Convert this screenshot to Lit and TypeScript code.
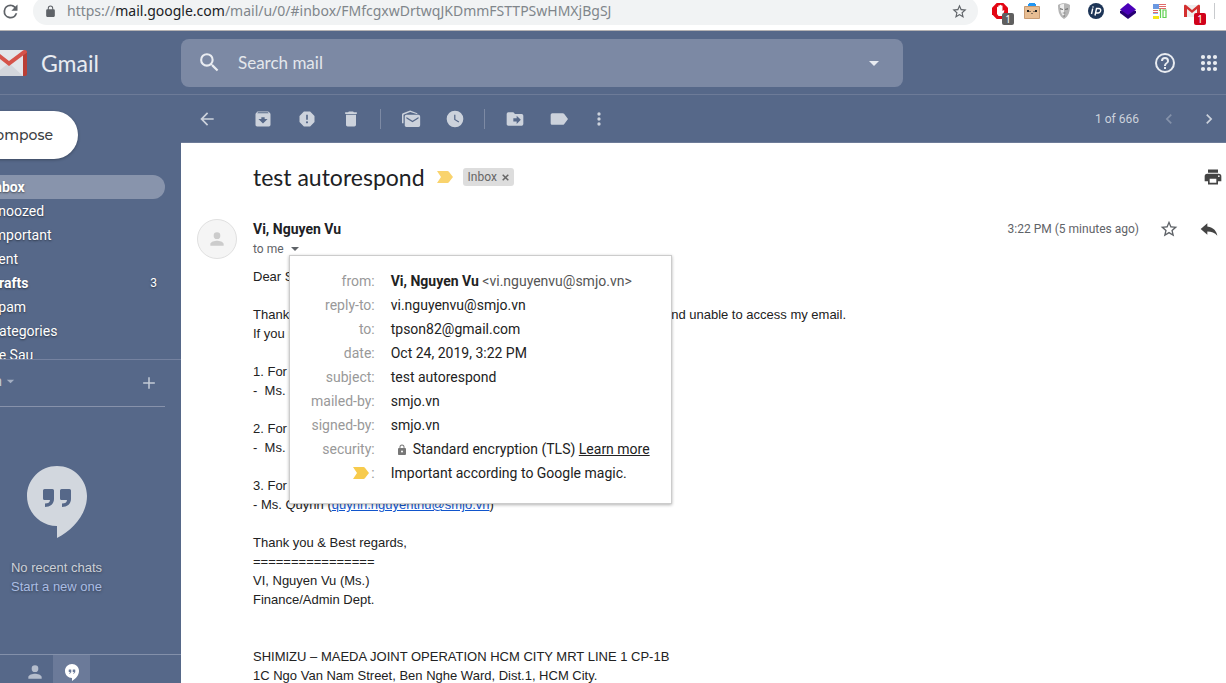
import { LitElement, html, css, svg, TemplateResult } from "lit";
import { customElement } from "lit/decorators.js";
import { classMap } from "lit/directives/class-map.js";

const paths: Record<string, string> = {
  reload: "M17.65 6.35A7.96 7.96 0 0 0 12 4a8 8 0 1 0 7.73 10h-2.08A6 6 0 1 1 12 6c1.66 0 3.14.69 4.22 1.78L13 11h7V4z",
  lock: "M18 8h-1V6A5 5 0 0 0 7 6v2H6a2 2 0 0 0-2 2v10c0 1.100.9 2 2 2h12a2 2 0 0 0 2-2V10a2 2 0 0 0-2-2zM8.900 6a3.100 3.100 0 0 1 6.200 0v2H8.900z",
  lockHole: "M18 8h-1V6A5 5 0 0 0 7 6v2H6a2 2 0 0 0-2 2v10c0 1.100.9 2 2 2h12a2 2 0 0 0 2-2V10a2 2 0 0 0-2-2zm-6 9a2 2 0 1 1 0-4 2 2 0 0 1 0 4zM8.900 8V6a3.100 3.100 0 0 1 6.200 0v2z",
  star: "M22 9.240l-7.190-.62L12 2 9.190 8.630 2 9.240l5.460 4.730L5.820 21 12 17.270 18.180 21l-1.630-7.030L22 9.240zM12 15.400l-3.760 2.270 1-4.280-3.320-2.880 4.380-.38L12 6.100l1.710 4.040 4.380.38-3.320 2.880 1 4.280L12 15.400z",
  search: "M15.500 14h-.79l-.28-.27A6.470 6.470 0 0 0 16 9.500 6.500 6.500 0 1 0 9.500 16c1.610 0 3.090-.59 4.230-1.570l.27.28v.79l5 4.990L20.490 19l-4.990-5zm-6 0a4.500 4.500 0 1 1 0-9 4.500 4.500 0 0 1 0 9z",
  help: "M11 18h2v-2h-2v2zm1-16a10 10 0 1 0 0 20 10 10 0 0 0 0-20zm0 18a8 8 0 1 1 0-16 8 8 0 0 1 0 16zm0-14a4 4 0 0 0-4 4h2a2 2 0 1 1 4 0c0 2-3 1.750-3 5h2c0-2.250 3-2.500 3-5a4 4 0 0 0-4-4z",
  back: "M20 11H7.830l5.590-5.590L12 4l-8 8 8 8 1.410-1.410L7.830 13H20v-2z",
  archive: "M20.540 5.230l-1.390-1.680A1.450 1.450 0 0 0 18 3H6c-.47 0-.88.21-1.160.55L3.460 5.230C3.170 5.570 3 6.020 3 6.500V19c0 1.100.9 2 2 2h14a2 2 0 0 0 2-2V6.500c0-.48-.17-.93-.46-1.270zM12 17.500L6.500 12H10v-2h4v2h3.500L12 17.500zM5.120 5l.81-1h12l.94 1H5.120z",
  spam: "M15.730 3H8.270L3 8.270v7.460L8.270 21h7.460L21 15.730V8.270L15.730 3zM12 17.300a1.300 1.300 0 1 1 0-2.600 1.300 1.300 0 0 1 0 2.600zm1-4.300h-2V7h2v6z",
  trash: "M6 19c0 1.100.9 2 2 2h8a2 2 0 0 0 2-2V7H6v12zM19 4h-3.500l-1-1h-5l-1 1H5v2h14V4z",
  unread: "M1.200 17V6.800c0-.8.400-1.400 1.100-1.700L11 1.800l8.600 3.300v1.300L11 3.700 3 6.800V17zM21 7H6.500a2 2 0 0 0-2 2v10.500c0 1.100.9 2 2 2H21a2 2 0 0 0 2-2V9a2 2 0 0 0-2-2zm0 4.400l-7.200 4.500-7.300-4.500V9.500l7.300 4.500L21 9.500z",
  clock: "M12 2a10 10 0 1 0 0 20 10 10 0 0 0 0-20zm4.200 14.200L11 13V7h1.500v5.200l4.500 2.700-.8 1.300z",
  move: "M20 6h-8l-2-2H4a2 2 0 0 0-2 2v12c0 1.100.9 2 2 2h16a2 2 0 0 0 2-2V8a2 2 0 0 0-2-2zm-6 12v-3h-4v-4h4V8l5 5-5 5z",
  label: "M18.100 5.840A2 2 0 0 0 16.500 5H4a2 2 0 0 0-2 2v10c0 1.100.9 2 2 2h12.500c.67 0 1.270-.33 1.630-.84L22.800 12l-4.700-6.160z",
  more: "M12 8a2 2 0 1 0 0-4 2 2 0 0 0 0 4zm0 2a2 2 0 1 0 0 4 2 2 0 0 0 0-4zm0 6a2 2 0 1 0 0 4 2 2 0 0 0 0-4z",
  prev: "M15.410 7.410L14 6l-6 6 6 6 1.410-1.410L10.830 12z",
  next: "M10 6L8.590 7.410 13.170 12l-4.580 4.590L10 18l6-6z",
  print: "M19 8H5a3 3 0 0 0-3 3v6h4v4h12v-4h4v-6a3 3 0 0 0-3-3zm-3 11H8v-5h8v5zm3-7a1 1 0 1 1 0-2 1 1 0 0 1 0 2zm-1-9H6v4h12V3z",
  reply: "M10 9V5l-8 7 8 7v-4.100c5 0 9 1.600 12 5.100-1-5-4-10-12-11z",
  person: "M12 12a4 4 0 1 0 0-8 4 4 0 0 0 0 8zm0 2c-2.670 0-8 1.340-8 4v2h16v-2c0-2.660-5.330-4-8-4z",
  plus: "M19 12.900h-6.100V19h-1.800v-6.100H5v-1.800h6.100V5h1.800v6.100H19z",
  caret: "M4 8h16l-8 8z",
};

const icon = (name: string, size = 20) =>
  html`<svg width=${size} height=${size} viewBox="0 0 24 24" fill="currentColor" fill-rule="evenodd" aria-hidden="true"><path d=${paths[name]}></path></svg>`;

const marker = html`<svg width="16" height="12" viewBox="0 0 16 12" fill="currentColor" aria-hidden="true"><path d="M0 0h10.500c.6 0 1 .2 1.400.7L16 6l-4.100 5.300c-.4.500-.8.700-1.400.7H0l4-6z"></path></svg>`;

const hangouts = (w: number, h: number) =>
  html`<svg width=${w} height=${h} viewBox="0 0 60 72" fill="currentColor" fill-rule="evenodd" aria-hidden="true"><path d="M30 0C13.400 0 0 13.400 0 30s13.400 30 30 30v12c16-8 30-24 30-42C60 13.400 46.600 0 30 0zM17.500 23h8a1.500 1.500 0 0 1 1.500 1.500V33c0 5-4 8-9 8v-3.500c3 0 5-1 5-3.500h-5.500a1.500 1.500 0 0 1-1.500-1.500v-8a1.500 1.500 0 0 1 1.500-1.500zm17 0h8a1.500 1.500 0 0 1 1.500 1.500V33c0 5-4 8-9 8v-3.500c3 0 5-1 5-3.500h-5.500a1.500 1.500 0 0 1-1.500-1.500v-8a1.500 1.500 0 0 1 1.500-1.500z"></path></svg>`;

@customElement("browser-bar")
export class BrowserBar extends LitElement {
  static styles = css`
    :host { display: flex; height: 30px; align-items: flex-start; overflow: hidden; background: #fff; border-bottom: 1px solid #b5b3b4; color: #5f6368; font: 14px/28px "Noto Sans", sans-serif; }
    button { display: grid; place-items: center; padding: 0; border: 0; background: none; color: inherit; }
    .reload { width: 20px; height: 23px; }
    .pill { flex: 1; display: flex; align-items: center; height: 28px; margin: -3px 0 0 13px; padding: 0 10px 0 11px; border-radius: 14px; background: #f1f3f4; }
    .url { flex: 1; margin-left: 10px; color: #80868b; white-space: nowrap; }
    .host { color: #202124; }
    .extensions { display: flex; gap: 16px; padding: 3px 14px 0; }
    .ext { position: relative; width: 16px; height: 16px; }
    .badge { position: absolute; left: 10px; top: 10px; width: 12px; height: 12px; border-radius: 2px; background: #5f5f5f; color: #fff; font: 10px/12px "Noto Sans", sans-serif; text-align: center; }
    .red { background: #d0021b; }
    .line { width: 1px; height: 16px; margin: 3px 11px 0 0; background: #c8cacd; }
  `;

  private ext(name: string, art: TemplateResult, badge = "") {
    return html`<button class="ext" aria-label=${name}>
      <svg width="16" height="16" viewBox="0 0 16 16" aria-hidden="true">${art}</svg>
      ${badge ? html`<span class=${classMap({ badge: true, red: name === "Mail" })}>${badge}</span>` : ""}
    </button>`;
  }

  render() {
    return html`
      <button class="reload" aria-label="Reload">${icon("reload", 21)}</button>
      <div class="pill">
        ${icon("lock", 13)}
        <span class="url">https://<span class="host">mail.google.com</span>/mail/u/0/#inbox/FMfcgxwDrtwqJKDmmFSTTPSwHMXjBgSJ</span>
        <button aria-label="Bookmark">${icon("star", 17)}</button>
      </div>
      <div class="extensions">
        ${this.ext("Blocker", svg`<path fill="#e30613" d="M4.700 0h6.600L16 4.700v6.600L11.300 16H4.700L0 11.300V4.700z"/><path fill="#fff" d="M5 4.500c0-1 1.300-1 1.300 0V3c0-1 1.400-1 1.400 0v-.5c0-1 1.400-1 1.400 0V3c0-1 1.400-1 1.400 0v5l.8-.6c.8-.5 1.300.2.900.8L10.500 13H6.500L5 11z"/>`, "1")}
        ${this.ext("Robot", svg`<path fill="#e7bd93" stroke="#c89b72" d="M.5 3.500h15v12H.5z"/><path fill="#2196f3" d="M5 0h6v1h1v2H4V1h1z"/><path fill="#222" d="M3 7h2v2H3zm8 0h2v2h-2zM5.500 8h1v1h-1zm4 0h1v1h-1zM7.500 10h1v1h-1z"/>`)}
        ${this.ext("Mask", svg`<path fill="#b5b5b5" d="M2 2c3-2.500 9-2.500 12 0 0 6-1 11-6 14C3 13 2 8 2 2z"/><path fill="#efefef" d="M4 2c1-1 3-1 4-1v13C5 11 4 7 4 2z"/><path fill="#777" d="M4 5l3 1v1L4 6.500zM9 6l3-1v1.500L9 7zM6 10l2-.6 2 .6-2 .6zM7.500 12h1v2h-1z"/>`)}
        ${this.ext("IP", svg`<circle cx="8" cy="8" r="8" fill="#1d3557"/><path fill="none" stroke="#fff" stroke-width="1.400" d="M4.700 5.500L3.500 11M7 12.500l1.500-7h2.300c3 0 2.200 4.500-.8 4.500H8"/><circle cx="5" cy="4" r=".8" fill="#fff"/>`)}
        ${this.ext("Layers", svg`<path fill="#280073" d="M0 8l8-3 8 3v2l-8 6-8-6z"/><path fill="#4a00b8" d="M8 0l8 6.500-8 5.500-8-5.500z"/>`)}
        ${this.ext("Languages", svg`<path fill="#6a98e0" d="M1 1h6v5H1z"/><path fill="#e06a6a" d="M7 1h7v1H7zm0 2h7v1H7zm0 2h7v1H7zM1 7h5v1H1zm0 2h5v1H1z"/><path fill="#8bb8f0" d="M1 10h5v1H1z"/><path fill="#f5e615" d="M1 13h6v3H1z"/><path fill="none" stroke="#5fd052" stroke-width="1.200" d="M7 7.500l1.500-1V15M11 7h3v7.500h-3z"/>`)}
        ${this.ext("Mail", svg`<path fill="#eee" d="M1 2h14v12H1z"/><path fill="#d32f2f" d="M0 3c0-1 1-1.500 2-1l6 5 6-5c1-.5 2 0 2 1v11h-3V6l-5 4-5-4v8H0z"/>`, "1")}
      </div>
      <span class="line"></span>
    `;
  }
}

@customElement("mail-rail")
export class MailRail extends LitElement {
  static styles = css`
    :host { display: flex; flex-direction: column; min-height: 0; overflow: hidden; color: #fff; font: 14px/24px Roboto, sans-serif; }
    .shift { flex: none; display: flex; flex-direction: column; height: 265px; box-sizing: border-box; margin-left: -79px; padding-top: 16px; overflow: hidden; border-bottom: 1px solid #7582a0; text-shadow: 0 1px 2px rgba(0, 0, 0, 0.5); }
    .compose { flex: none; width: 149px; height: 48px; margin: 0 0 16px 8px; padding: 0 25px 0 0; border: 0; border-radius: 24px; background: #fff; color: #3c4043; font: 500 14px/46px Montserrat, "Open Sans", sans-serif; text-align: right; box-shadow: 0 1px 3px rgba(0, 0, 0, 0.3); }
    .item { display: flex; justify-content: space-between; flex: none; height: 24px; margin-right: 16px; padding: 0 8px 0 69px; border-radius: 0 12px 12px 0; color: inherit; text-decoration: none; }
    .bold { font-weight: 700; }
    .active { background: #8894ac; }
    .count { font-size: 12px; font-weight: 400; }
    .account { display: flex; flex: none; justify-content: space-between; align-items: center; height: 46px; margin-right: 16px; border-bottom: 1px solid #8792ab; color: #c3cad6; }
    .account button { display: flex; align-items: center; padding: 0; border: 0; background: none; color: inherit; font: inherit; }
    .who { margin-left: -22px; gap: 3px; height: 28px; align-self: flex-start; padding-top: 8px; }
    .who svg { color: #a3aec2; }
    .add { margin-right: 6px; }
    .account .who { padding-top: 14px; }
    .chats { flex: 1; width: 113px; padding-top: 59px; box-sizing: border-box; color: #ccd1d8; font: 13px/19px "Liberation Sans", Arial, sans-serif; text-align: center; text-shadow: 0 1px 3px rgba(0, 0, 0, 0.4); }
    .chats svg { display: block; margin: 0 auto 20px; color: #d2d7de; }
    .chats p { margin: 0; }
    .chats a { color: #aabde4; text-decoration: none; }
    .tabs { display: flex; flex: none; height: 28px; border-top: 1px solid #8390aa; padding-left: 16px; }
    .tab { display: grid; place-items: center; width: 37px; height: 34px; padding: 0; border: 0; background: none; color: #b5bdcc; }
    .on { background: #6b7a99; color: #fff; }
  `;

  private folders = [
    { name: "Inbox", bold: true, active: true },
    { name: "Snoozed" },
    { name: "Important" },
    { name: "Sent" },
    { name: "Drafts", bold: true, count: 3 },
    { name: "Spam" },
    { name: "Categories" },
    { name: "Be Sau" },
  ] as { name: string; bold?: boolean; active?: boolean; count?: number }[];

  render() {
    return html`
      <nav class="shift">
        <button class="compose">Compose</button>
        ${this.folders.map((f) => html`<a href="#" class=${classMap({ item: true, bold: !!f.bold, active: !!f.active })}><span>${f.name}</span><span class="count">${f.count ?? ""}</span></a>`)}
      </nav>
      <div class="account">
        <button class="who"><span>Son</span>${icon("caret", 11)}</button>
        <button class="add" aria-label="New chat">${icon("plus", 20)}</button>
      </div>
      <section class="chats">
        ${hangouts(60, 72)}
        <p>No recent chats</p>
        <a href="#">Start a new one</a>
      </section>
      <div class="tabs">
        <button class="tab" aria-label="Contacts">${icon("person", 20)}</button>
        <button class="tab on" aria-label="Conversations">${hangouts(14, 17)}</button>
      </div>
    `;
  }
}

@customElement("mail-message")
export class MailMessage extends LitElement {
  static styles = css`
    :host { display: block; min-width: 0; min-height: 0; overflow: hidden; padding: 0 3px 0 16px; background: #fff; color: #202124; font: 14px/24px Roboto, sans-serif; }
    button { display: inline-flex; align-items: center; padding: 0; border: 0; background: none; color: inherit; font: inherit; }
    .title { display: flex; align-items: center; height: 28px; padding: 20px 0 28px 56px; }
    h1 { margin: 0 12px 0 0; font: 400 23px/28px Lato, sans-serif; }
    .marker { color: #f9d36d; }
    .chip { display: flex; align-items: center; gap: 5px; height: 18px; margin: 0 auto 0 10px; padding: 0 5px; border-radius: 3px; background: #ddd; color: #666; font-size: 12px; }
    .tool { color: #444; }
    .sender { display: flex; align-items: flex-start; padding-right: 4px; }
    .avatar { display: grid; place-items: center; width: 38px; height: 38px; margin-right: 16px; border: 1px solid #e0e0e0; border-radius: 50%; background: #f5f5f5; color: #ccc; }
    .who { position: relative; line-height: 20px; }
    .name { display: block; }
    .to { display: flex; gap: 5px; height: 20px; color: #5f6368; font-size: 12px; }
    .meta { display: flex; align-items: center; gap: 20px; height: 20px; margin-left: auto; color: #5f6368; font-size: 12px; white-space: nowrap; }
    .details { position: absolute; z-index: 1; left: 36px; top: 36px; padding: 13px 21px 18px; border: 1px solid #ccc; background: #fff; box-shadow: 0 1px 3px rgba(0, 0, 0, 0.3); white-space: nowrap; }
    table { border-collapse: collapse; line-height: 24px; }
    th, td { height: 24px; padding: 0; font-weight: 400; }
    th { padding-right: 16px; color: #999; text-align: right; }
    td { color: #222; text-align: left; }
    td a { color: inherit; }
    .address { color: #555; }
    .gold { display: inline-block; margin-right: 2px; color: #f7cb4d; vertical-align: -1px; }
    .gold svg, .lock svg { display: block; }
    .lock { display: inline-block; margin: 0 5px; color: #777; vertical-align: -2px; }
    .body { margin: 8px 0 0 56px; color: #222; font: 13px/19px "Liberation Sans", Arial, sans-serif; white-space: pre; }
    .body a { color: #15c; }
  `;

  private rows: [unknown, unknown][] = [
    ["from:", html`<b>Vi, Nguyen Vu</b> <span class="address">&lt;vi.nguyenvu@smjo.vn&gt;</span>`],
    ["reply-to:", "vi.nguyenvu@smjo.vn"],
    ["to:", "tpson82@gmail.com"],
    ["date:", "Oct 24, 2019, 3:22 PM"],
    ["subject:", "test autorespond"],
    ["mailed-by:", "smjo.vn"],
    ["signed-by:", "smjo.vn"],
    ["security:", html`<span class="lock">${icon("lockHole", 12)}</span>Standard encryption (TLS) <a href="#">Learn more</a>`],
    [html`<span class="gold">${marker}</span>:`, "Important according to Google magic."],
  ];

  private lines: unknown[] = [
    "Dear Sir,",
    "",
    "Thank you for your email. I am out of the office until Monday next week and unable to access my email.",
    "If you need help:",
    "",
    "1. For HR:",
    "-  Ms. Lan",
    "",
    "2. For tax:",
    "-  Ms. Hoa",
    "",
    "3. For IT:",
    html`- Ms. Quynh (<a href="mailto:quynh.nguyenthu@smjo.vn">quynh.nguyenthu@smjo.vn</a>)`,
    "",
    "Thank you & Best regards,",
    "================",
    "VI, Nguyen Vu (Ms.)",
    "Finance/Admin Dept.",
    "",
    "",
    "SHIMIZU – MAEDA JOINT OPERATION HCM CITY MRT LINE 1 CP-1B",
    "1C Ngo Van Nam Street, Ben Nghe Ward, Dist.1, HCM City.",
  ];

  render() {
    return html`
      <div class="title">
        <h1>test autorespond</h1>
        <button class="marker" aria-label="Important">${marker}</button>
        <span class="chip">Inbox <button aria-label="Remove label"><svg width="7" height="7" viewBox="0 0 7 7" stroke="currentColor" stroke-width="1.500"><path d="M.7.7l5.600 5.600M6.300.7L.7 6.300"></path></svg></button></span>
        <button class="tool" aria-label="Print">${icon("print")}</button>
      </div>
      <div class="sender">
        <span class="avatar">${icon("person")}</span>
        <div class="who">
          <b class="name">Vi, Nguyen Vu</b>
          <button class="to">to me ${icon("caret", 12)}</button>
          <div class="details">
            <table>
              ${this.rows.map(([k, v]) => html`<tr><th scope="row">${k}</th><td>${v}</td></tr>`)}
            </table>
          </div>
        </div>
        <div class="meta">
          <span>3:22 PM (5 minutes ago)</span>
          <button aria-label="Star">${icon("star")}</button>
          <button class="tool" aria-label="Reply">${icon("reply")}</button>
        </div>
      </div>
      <div class="body">${this.lines.map((l) => html`${l}<br />`)}</div>
    `;
  }
}

@customElement("app-root")
export class AppRoot extends LitElement {
  static styles = css`
    :host { display: flex; flex-direction: column; height: 100vh; overflow: hidden; background: #566889; font-family: Roboto, sans-serif; }
    button { display: grid; place-items: center; padding: 0; border: 0; background: none; color: inherit; }
    header { flex: none; display: flex; align-items: center; height: 63px; padding-right: 8px; border-bottom: 1px solid #6d7b98; color: #e9ecf1; }
    .brand { display: flex; align-items: center; gap: 13px; flex: none; width: 181px; color: #e9ecf1; font: 23px/28px Lato, sans-serif; text-decoration: none; }
    .search { flex: 0 1 722px; display: flex; align-items: center; height: 48px; border-radius: 8px; background: #7c89a4; }
    .glass { margin: 0 16px; }
    .search input { flex: 1; min-width: 0; padding: 0; border: 0; outline: 0; background: none; color: #e9ecf1; font: 17px/24px Lato, sans-serif; }
    .search input::placeholder { color: #e4e7ec; opacity: 1; }
    .options { margin-right: 19px; }
    .links { display: flex; align-items: center; gap: 23px; margin-left: auto; }
    main { flex: 1; min-height: 0; display: grid; grid-template-columns: 181px 1fr; }
    .pane { min-width: 0; min-height: 0; display: flex; flex-direction: column; }
    .pane mail-message { flex: 1; }
    .toolbar { flex: none; display: flex; align-items: center; height: 47px; padding: 0 7px 0 16px; border-bottom: 1px solid #6d7b98; color: #ccd2dc; }
    .group { display: flex; gap: 24px; margin-left: 36px; }
    .ruled { margin-left: 19px; padding-left: 20px; border-left: 1px solid #7d8aa4; }
    .last { margin-left: 20px; }
    .pager { display: flex; align-items: center; gap: 20px; margin-left: auto; font-size: 12px; }
    .dim { opacity: 0.4; }
  `;

  private tool(label: string, name: string) {
    return html`<button aria-label=${label}>${icon(name)}</button>`;
  }

  render() {
    return html`
      <browser-bar></browser-bar>
      <header>
        <a class="brand" href="#">
          <svg width="28" height="28" viewBox="0 0 28 28" aria-hidden="true">
            <path fill="#e3e5e9" d="M0 1h25v26H0z"></path>
            <path fill="#d3d6dc" d="M0 21l9-7 14 13H0z"></path>
            <path fill="#b93f36" d="M23 4l4-2v23a2 2 0 0 1-2 2h-2z"></path>
            <path fill="#d5534a" d="M0 5l9 7L23 1.500C25 .5 27 1 27 3.500L9 17 0 10z"></path>
          </svg>
          Gmail
        </a>
        <form class="search" role="search">
          <button class="glass" type="button" aria-label="Search">${icon("search", 25)}</button>
          <input type="text" placeholder="Search mail" aria-label="Search mail" />
          <button class="options" type="button" aria-label="Search options">
            <svg width="20" height="20" viewBox="0 0 20 20" fill="currentColor" aria-hidden="true"><path d="M5 8h10l-5 5z"></path></svg>
          </button>
        </form>
        <div class="links">
          <button aria-label="Help">${icon("help", 24)}</button>
          <button aria-label="Apps">
            <svg width="18" height="18" viewBox="0 0 18 18" fill="currentColor" aria-hidden="true">
              ${[3, 9, 15].map((y) => [3, 9, 15].map((x) => svg`<circle cx=${x} cy=${y} r="2.100"></circle>`))}
            </svg>
          </button>
        </div>
      </header>
      <main>
        <mail-rail></mail-rail>
        <div class="pane">
          <div class="toolbar">
            ${this.tool("Back", "back")}
            <div class="group">${this.tool("Archive", "archive")}${this.tool("Report spam", "spam")}${this.tool("Delete", "trash")}</div>
            <div class="group ruled">${this.tool("Mark as unread", "unread")}${this.tool("Snooze", "clock")}</div>
            <div class="group ruled">${this.tool("Move to", "move")}${this.tool("Labels", "label")}</div>
            <div class="group last">${this.tool("More", "more")}</div>
            <div class="pager">
              <span>1 of 666</span>
              <button class="dim" aria-label="Newer">${icon("prev")}</button>
              <button aria-label="Older">${icon("next")}</button>
            </div>
          </div>
          <mail-message></mail-message>
        </div>
      </main>
    `;
  }
}
